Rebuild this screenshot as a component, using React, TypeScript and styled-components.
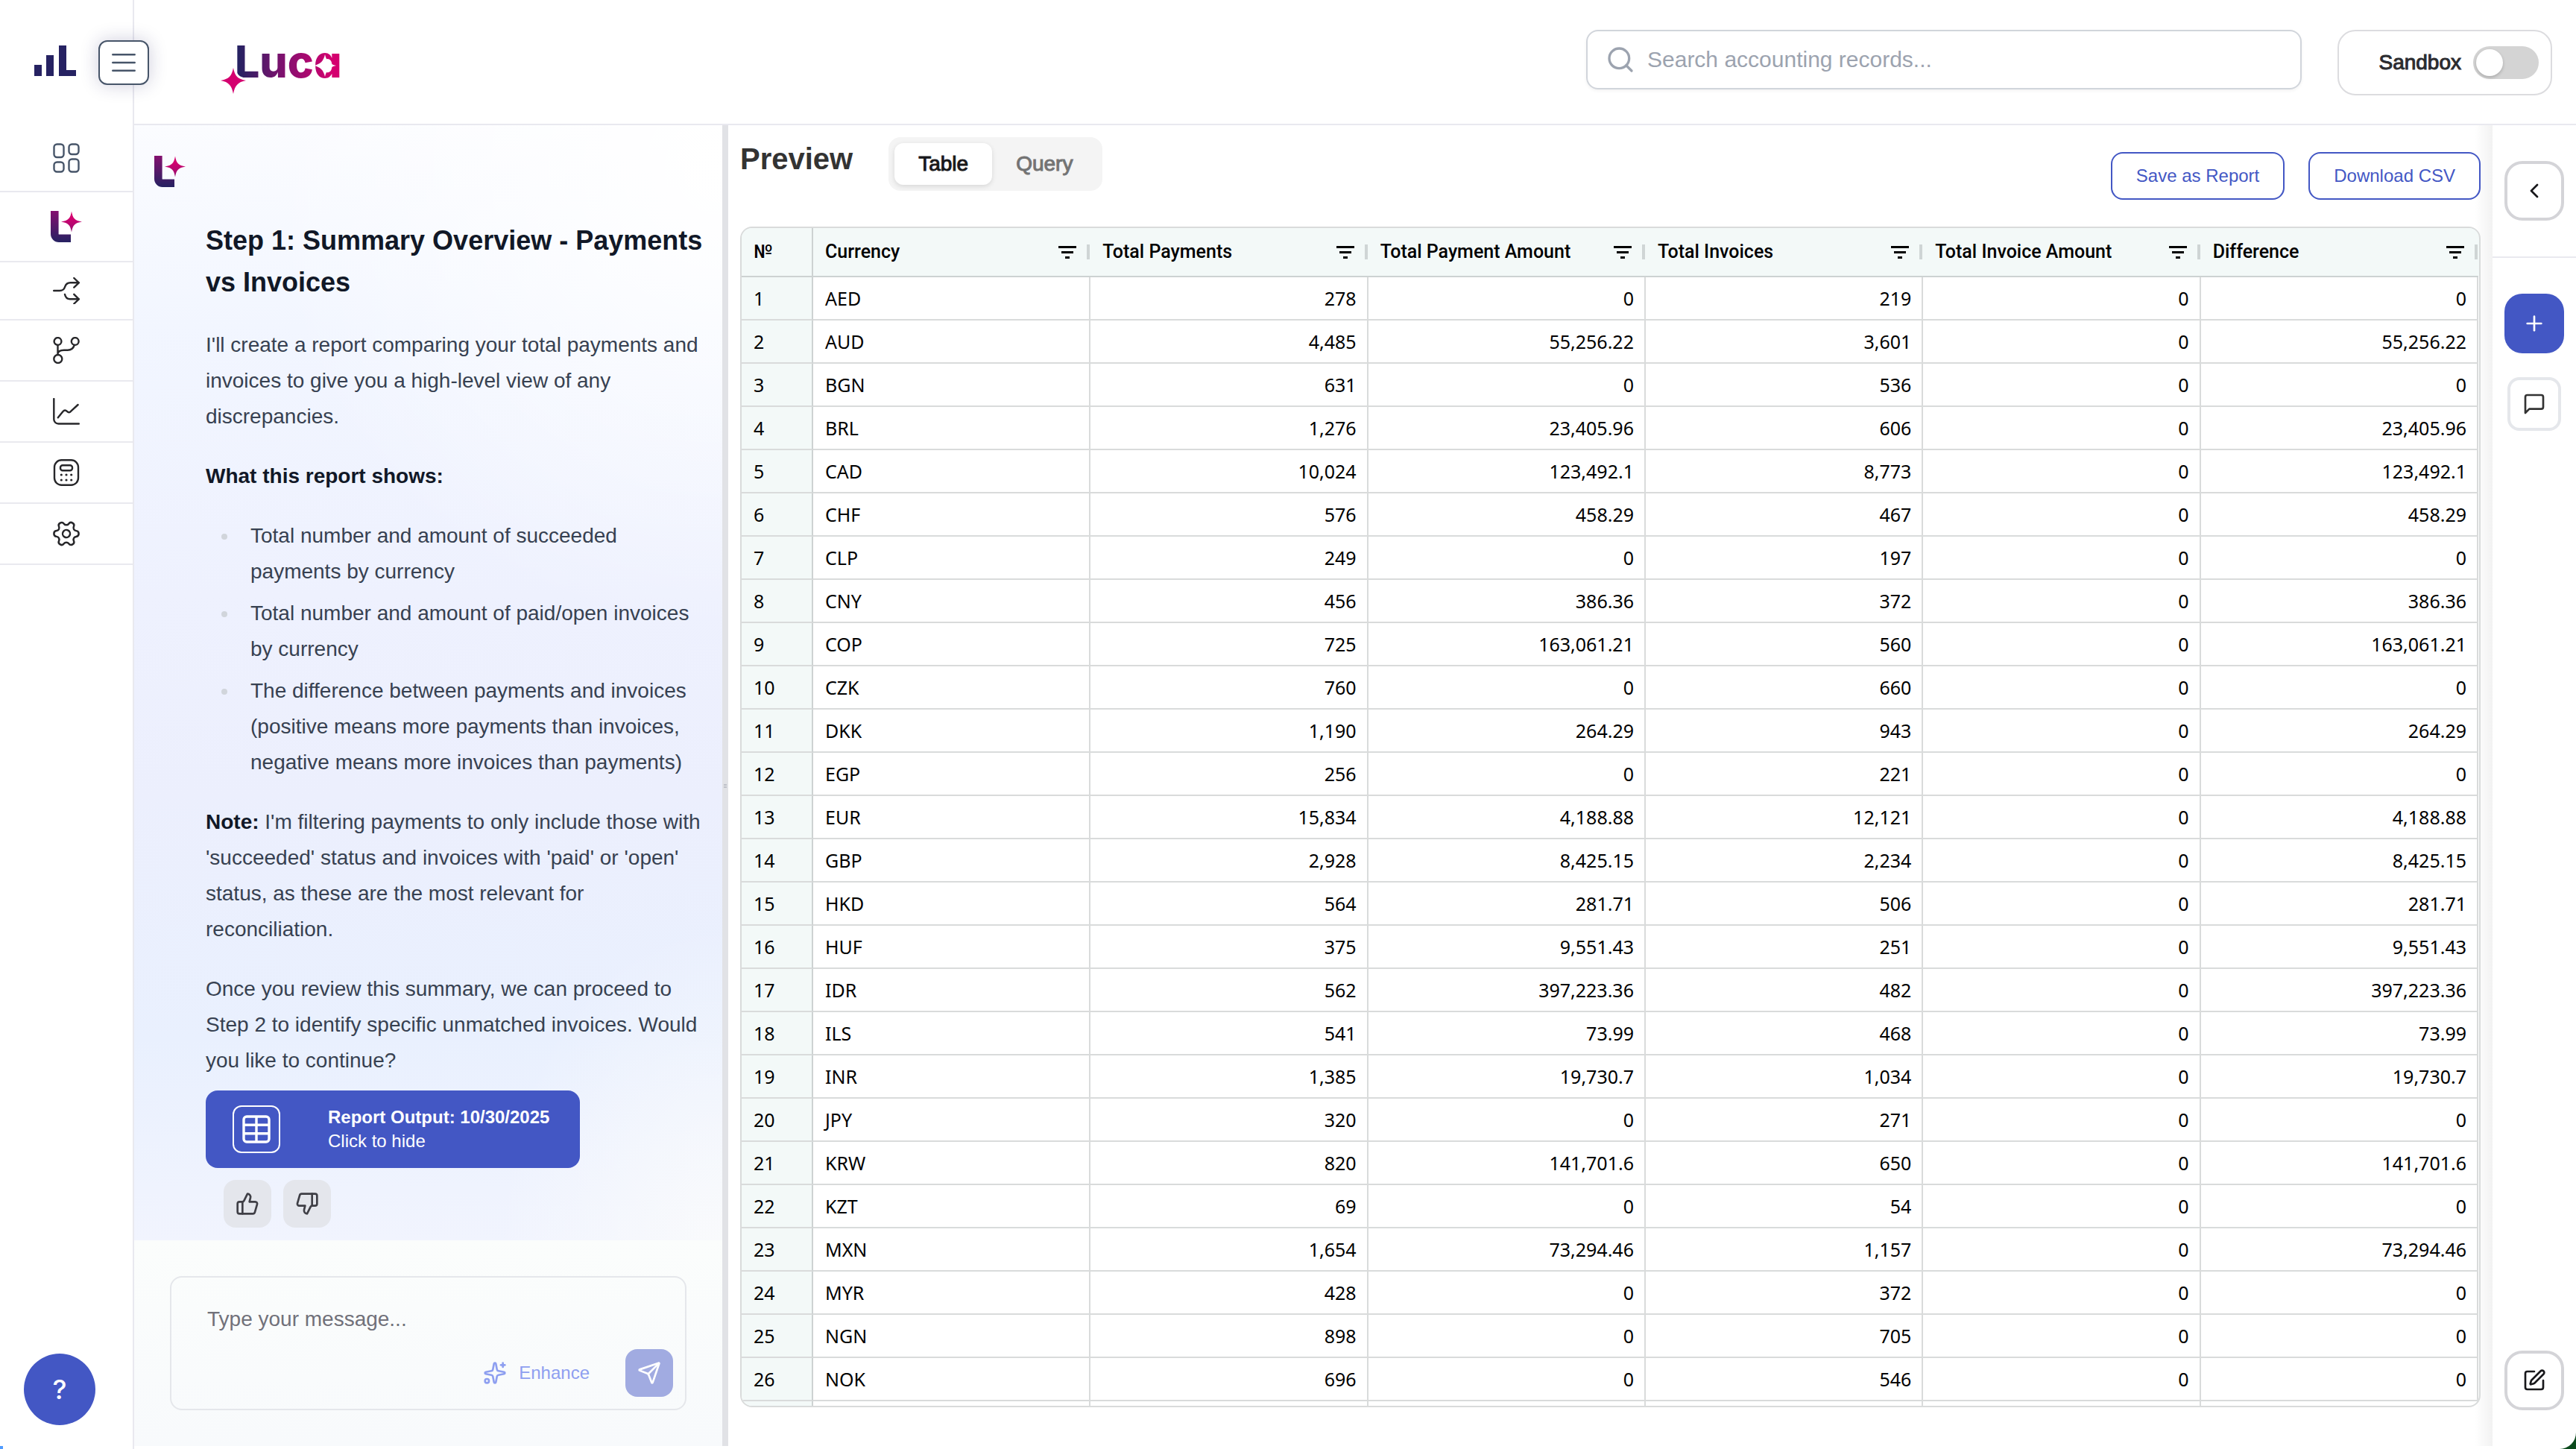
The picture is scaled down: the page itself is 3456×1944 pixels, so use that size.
import React, { useState } from "react";
import styled, { createGlobalStyle } from "styled-components";
import {
  ChevronLeft,
  Plus,
  Search,
  Send,
  Settings,
  Sparkles,
  SquarePen,
  ThumbsDown,
  ThumbsUp,
} from "lucide-react";

const sans = '"Liberation Sans", Arial, Helvetica, sans-serif';
const gridFont = '"Noto Sans", "Open Sans", sans-serif';
const gridHeadFont = 'Roboto, "Noto Sans", sans-serif';

const color = {
  brand: "#4357c4",
  navy: "#262262",
  pink: "#d4006f",
  rule: "#e9e9ef",
  slate: "#475569",
  body: "#374151",
  ink: "#111827",
  gridLine: "#d9dbdb",
  gridTint: "#f3f9f8",
};

const GlobalStyle = createGlobalStyle`
  *, *::before, *::after { box-sizing: border-box; }
  body { margin: 0; background: #0b4a1c; font-family: ${sans}; }
  button, input, textarea { font: inherit; }
  button { cursor: pointer; }
  svg { display: block; flex: none; }
`;

/* ---------- shell ---------- */

const Shell = styled.div`
  display: grid;
  grid-template-columns: 180px minmax(0, 1fr);
  height: 100vh;
  border-bottom-right-radius: 22px;
  overflow: hidden;
  background: linear-gradient(#4f9bff, #4f9bff) left bottom / 4px 4px no-repeat, #fff;
`;

const Sidebar = styled.aside`
  position: relative;
  z-index: 2;
  display: flex;
  flex-direction: column;
  border-right: 2px solid ${color.rule};
`;

const SidebarHead = styled.div`
  position: relative;
  flex: none;
  height: 168px;
  padding: 60px 46px 0;
`;

const MenuButton = styled.button`
  position: absolute;
  top: 54px;
  right: -22px;
  display: grid;
  place-items: center;
  width: 68px;
  height: 60px;
  padding: 0;
  border: 2px solid ${color.slate};
  border-radius: 12px;
  background: #fff;
  color: ${color.slate};
  box-shadow: 0 0 24px rgba(38, 34, 98, 0.22);
`;

const NavList = styled.nav`
  display: flex;
  flex-direction: column;
`;

const NavItem = styled.a<{ $height: number; $muted?: boolean }>`
  display: grid;
  place-items: center;
  height: ${(p) => p.$height}px;
  border-bottom: 2px solid ${color.rule};
  color: ${(p) => (p.$muted ? color.slate : "#27272a")};
`;

const TurnedGear = styled(Settings)`
  transform: rotate(30deg);
`;

const HelpButton = styled.button`
  width: 96px;
  height: 96px;
  margin: auto 0 32px 32px;
  border: 0;
  border-radius: 50%;
  background: ${color.brand};
  color: #fff;
  font: 500 36px/1 Inter, ${sans};
`;

const Column = styled.div`
  display: flex;
  flex-direction: column;
  min-width: 0;
  min-height: 0;
  padding-bottom: 4px;
`;

/* ---------- top bar ---------- */

const TopBar = styled.header`
  display: flex;
  align-items: flex-start;
  flex: none;
  height: 168px;
  padding: 40px 32px 0 116px;
  border-bottom: 2px solid ${color.rule};
`;

const SearchBox = styled.label`
  display: flex;
  align-items: center;
  gap: 16px;
  width: 960px;
  height: 80px;
  margin: 0 48px 0 auto;
  padding: 0 24px;
  border: 2px solid #d1d5db;
  border-radius: 16px;
  color: #9ca3af;
  box-shadow: 0 2px 4px rgba(0, 0, 0, 0.05);

  input {
    flex: 1;
    min-width: 0;
    padding: 0;
    border: 0;
    outline: 0;
    background: none;
    color: ${color.ink};
    font-size: 30px;
    line-height: 40px;
  }
  input::placeholder { color: #9ca3af; opacity: 1; }
`;

const SandboxBox = styled.label`
  display: flex;
  align-items: center;
  justify-content: flex-end;
  gap: 16px;
  width: 288px;
  height: 88px;
  padding: 0 16px 0 0;
  border: 2px solid #dcdcdf;
  border-radius: 24px;
  color: #2b2b2f;
  font-size: 28px;
  -webkit-text-stroke: 1px currentColor;
`;

const Toggle = styled.input`
  appearance: none;
  display: flex;
  align-items: center;
  width: 88px;
  height: 44px;
  margin: 0;
  padding: 4px;
  border-radius: 22px;
  background: #d4d4d4;

  &::before {
    content: "";
    width: 36px;
    height: 36px;
    border-radius: 50%;
    background: #fff;
    box-shadow: 0 2px 4px rgba(0, 0, 0, 0.2);
  }
  &:checked { justify-content: flex-end; background: ${color.brand}; }
`;

/* ---------- workspace ---------- */

const Workspace = styled.div`
  display: grid;
  grid-template-columns: 789px 8px minmax(0, 1fr) 112px;
  flex: 1;
  min-height: 0;
`;

const ChatPanel = styled.section`
  display: flex;
  flex-direction: column;
  min-height: 0;
`;

const Thread = styled.div`
  flex: 1;
  min-height: 0;
  overflow: hidden;
  padding: 41px 16px 16px 27px;
  background:
    radial-gradient(ellipse 620px 620px at 100% 4%, #fff 0%, rgba(255, 255, 255, 0) 100%),
    radial-gradient(ellipse 300px 420px at 100% 100%, rgba(250, 251, 252, 0.9) 0%, rgba(250, 251, 252, 0) 100%),
    linear-gradient(180deg, #fbfcff 0%, #f2f6ff 18%, #eef1fe 42%, #eceffd 60%, #e9f0fe 82%, #f1f4fe 100%);
`;

const Message = styled.article`
  display: flex;
  flex-direction: column;
  align-items: flex-start;
  gap: 32px;
  margin: 44px 0 0 69px;
  color: ${color.body};
  font-size: 28px;
  line-height: 48px;

  h2 {
    margin: 0;
    color: ${color.ink};
    font-size: 36px;
    line-height: 56px;
  }
  p { margin: 0; }
  strong { color: ${color.ink}; }
  ul {
    display: flex;
    flex-direction: column;
    gap: 8px;
    margin: 0;
    padding-left: 44px;
  }
  li { padding-left: 16px; }
  li::marker { color: #d1d5db; }
`;

const ReportCard = styled.button`
  display: flex;
  align-items: center;
  gap: 64px;
  height: 104px;
  min-width: 502px;
  margin: 16px 0 0 69px;
  padding: 0 36px;
  border: 0;
  border-radius: 16px;
  background: ${color.brand};
  color: #fff;
  text-align: left;
  font-size: 24px;
  line-height: 32px;
`;

const ReportIcon = styled.span`
  display: grid;
  place-items: center;
  width: 64px;
  height: 64px;
  border: 2px solid #fff;
  border-radius: 12px;
`;

const ReportText = styled.span`
  display: flex;
  flex-direction: column;
`;

const Feedback = styled.div`
  display: flex;
  gap: 16px;
  margin: 16px 0 0 93px;
`;

const FeedbackButton = styled.button`
  display: grid;
  place-items: center;
  width: 64px;
  height: 64px;
  padding: 0;
  border: 0;
  border-radius: 16px;
  background: #e4e6ec;
  color: #3f3f46;
`;

const Composer = styled.form`
  flex: none;
  padding: 48px;
  background: linear-gradient(#fbfdfc, #f8fafc);
`;

const ComposerBox = styled.div`
  display: flex;
  flex-direction: column;
  height: 180px;
  padding: 32px 16px 16px 48px;
  border: 2px solid #e5e7eb;
  border-radius: 16px;

  textarea {
    flex: 1;
    min-height: 0;
    padding: 8px 0;
    border: 0;
    outline: 0;
    resize: none;
    overflow: hidden;
    background: none;
    color: ${color.ink};
    font-size: 28px;
    line-height: 32px;
  }
  textarea::placeholder { color: #71717a; opacity: 1; }
`;

const ComposerActions = styled.div`
  display: flex;
  align-items: center;
  justify-content: flex-end;
  gap: 48px;
`;

const EnhanceButton = styled.button`
  display: flex;
  align-items: center;
  gap: 16px;
  padding: 0;
  border: 0;
  background: none;
  color: #8e9ff0;
  font-size: 24px;
`;

const SendButton = styled.button`
  display: grid;
  place-items: center;
  width: 64px;
  height: 64px;
  padding: 0;
  border: 0;
  border-radius: 16px;
  background: #a1abe1;
  color: #fff;
`;

const Splitter = styled.div`
  display: flex;
  flex-direction: column;
  align-items: center;
  justify-content: center;
  gap: 1px;
  background: #e1e2e6;

  i {
    width: 4px;
    height: 1px;
    background: #b3b6bf;
  }
`;

/* ---------- preview ---------- */

const Preview = styled.main`
  display: flex;
  flex-direction: column;
  min-width: 0;
  min-height: 0;
  padding: 16px 16px 52px;
  background: linear-gradient(90deg, rgba(0, 0, 0, 0), rgba(0, 0, 0, 0.05)) right / 24px 100% no-repeat, #fff;
`;

const PreviewBar = styled.div`
  display: flex;
  align-items: flex-start;
  flex: none;
  height: 120px;

  h1 {
    margin: 0 48px 0 0;
    color: #333;
    font-size: 40px;
    line-height: 58px;
  }
`;

const Tabs = styled.div`
  display: flex;
  padding: 8px;
  border-radius: 16px;
  background: #f4f4f4;
`;

const Tab = styled.button<{ $active: boolean }>`
  height: 56px;
  padding: 0 32px;
  border: 0;
  border-radius: 12px;
  background: ${(p) => (p.$active ? "#fff" : "transparent")};
  box-shadow: ${(p) => (p.$active ? "0 2px 6px rgba(0, 0, 0, 0.12)" : "none")};
  color: ${(p) => (p.$active ? "#18181b" : "#737373")};
  font-size: 28px;
  -webkit-text-stroke: 1px currentColor;
`;

const Actions = styled.div`
  display: flex;
  gap: 32px;
  margin: 20px 0 0 auto;
`;

const OutlineButton = styled.button`
  height: 64px;
  padding: 0 32px;
  border: 2px solid ${color.brand};
  border-radius: 16px;
  background: #fff;
  color: ${color.brand};
  font-size: 24px;
`;

const GridFrame = styled.div`
  flex: 1;
  min-height: 0;
  overflow: hidden;
  padding-right: 1px;
  border: 2px solid ${color.gridLine};
  border-radius: 16px;
  background: linear-gradient(${color.gridTint}, ${color.gridTint}) top / 100% 64px no-repeat, #fff;
`;

const Grid = styled.table`
  width: 100%;
  table-layout: fixed;
  border-collapse: separate;
  border-spacing: 0;
  color: #000;
  font-family: ${gridFont};
  font-size: 25px;
  line-height: 32px;

  th, td {
    padding: 0 14px 0 16px;
    border-right: 2px solid ${color.gridLine};
    border-bottom: 2px solid ${color.gridLine};
    font-weight: 400;
    text-align: right;
  }
  thead th {
    height: 66px;
    padding-right: 1px;
    border-right: 0;
    border-bottom-color: #cdd2d2;
    background: ${color.gridTint};
    font-family: ${gridHeadFont};
    font-weight: 500;
    text-align: left;
  }
  tbody tr { height: 58px; }
  thead th:first-child, tbody th { border-right: 2px solid #cdd2d2; }
  tbody th { background: ${color.gridTint}; text-align: left; }
  td:nth-child(2) { text-align: left; }
`;

const HeadCell = styled.div`
  display: flex;
  align-items: center;
  gap: 14px;
  white-space: nowrap;

  button {
    margin-left: auto;
    padding: 0;
    border: 0;
    background: none;
    color: #000;
  }
`;

const ColumnGrip = styled.i`
  width: 4px;
  height: 20px;
  background: #cfd5d5;
`;

/* ---------- right rail ---------- */

const Rail = styled.aside`
  display: flex;
  flex-direction: column;
  align-items: center;
`;

const RailTop = styled.div`
  flex: none;
  align-self: stretch;
  display: flex;
  justify-content: center;
  height: 178px;
  padding-top: 48px;
  border-bottom: 2px solid ${color.rule};
`;

const RailButton = styled.button<{ $kind: "outline" | "solid" | "soft" }>`
  display: grid;
  place-items: center;
  width: ${(p) => (p.$kind === "soft" ? 72 : 80)}px;
  height: ${(p) => (p.$kind === "soft" ? 72 : 80)}px;
  padding: 0;
  border: ${(p) => (p.$kind === "solid" ? "0" : `4px solid ${p.$kind === "soft" ? "#e5e7eb" : "#d4d4d8"}`)};
  border-radius: ${(p) => (p.$kind === "soft" ? 16 : 24)}px;
  background: ${(p) => (p.$kind === "solid" ? color.brand : "#fff")};
  color: ${(p) => (p.$kind === "solid" ? "#fff" : "#18181b")};
`;

const RailTools = styled.div`
  display: flex;
  flex: 1;
  flex-direction: column;
  align-items: center;
  gap: 32px;
  padding: 48px 0;

  > :last-child { margin-top: auto; }
`;

/* ---------- drawings ---------- */

const LineIcon = ({ size = 36, children }: { size?: number; children: React.ReactNode }) => (
  <svg
    width={size}
    height={size}
    viewBox={`0 0 ${size} ${size}`}
    fill="none"
    stroke="currentColor"
    strokeWidth="2.4"
    strokeLinecap="round"
    strokeLinejoin="round"
    aria-hidden
  >
    {children}
  </svg>
);

const BarsLogo = () => (
  <svg width="56" height="42" viewBox="0 0 56 42" fill={color.navy} role="img" aria-label="Home">
    <rect x="0" y="27" width="10" height="15" />
    <rect x="16" y="14" width="10" height="28" />
    <rect x="33" y="1" width="10" height="41" />
    <rect x="33" y="34" width="23" height="8" />
  </svg>
);

const LucaMark = ({ id }: { id: string }) => (
  <svg width="42" height="42" viewBox="0 0 42 42" role="img" aria-label="Luca">
    <defs>
      <linearGradient id={`${id}-stem`} gradientUnits="userSpaceOnUse" x1="0" y1="0" x2="0" y2="42">
        <stop offset="0" stopColor="#84106f" />
        <stop offset="1" stopColor={color.navy} />
      </linearGradient>
      <linearGradient id={`${id}-star`} x1="0" y1="0" x2="0" y2="1">
        <stop offset="0.3" stopColor={color.pink} />
        <stop offset="1" stopColor="#92106f" />
      </linearGradient>
    </defs>
    <path d="M5.3 0V31a5.7 5.7 0 0 0 5.7 5.7H27" fill="none" stroke={`url(#${id}-stem)`} strokeWidth="10.6" />
    <path
      d="M28 0.500C29.500 9.500 32 13 42 14.500C32 16 29.500 19.500 28 28.500C26.500 19.500 24 16 14 14.500C24 13 26.500 9.500 28 0.500Z"
      fill={`url(#${id}-star)`}
    />
  </svg>
);

const LucaWordmark = () => (
  <svg width="176" height="92" viewBox="0 0 176 92" role="img" aria-label="Luca">
    <defs>
      <linearGradient id="wordmark" gradientUnits="userSpaceOnUse" x1="24" y1="0" x2="150" y2="0">
        <stop offset="0" stopColor={color.navy} />
        <stop offset="0.5" stopColor="#84106f" />
        <stop offset="1" stopColor={color.pink} />
      </linearGradient>
    </defs>
    <text
      x="19"
      y="64"
      fill="url(#wordmark)"
      style={{ font: "800 59px Inter, sans-serif", fontFeatureSettings: '"cv11"' }}
    >
      Luca
    </text>
    <path d="M140 33C142 42 146 46 155 48C146 50 142 54 140 63C138 54 134 50 125 48C134 46 138 42 140 33Z" fill="#fff" />
    <path
      d="M17 51C19 62 23 66 34 68C23 70 19 75 17 86C15 75 11 70 0 68C11 66 15 62 17 51Z"
      fill={color.pink}
      stroke="#fff"
      strokeWidth="6"
      paintOrder="stroke"
    />
  </svg>
);

const GridIcon = () => (
  <svg width="36" height="40" viewBox="0 0 36 40" fill="none" stroke="currentColor" strokeWidth="2.4" aria-hidden>
    <rect x="1.500" y="1.500" width="13" height="17.500" rx="4" />
    <rect x="21.500" y="1.500" width="13" height="13.500" rx="4" />
    <rect x="1.500" y="25.500" width="13" height="13" rx="4" />
    <rect x="21.500" y="21.500" width="13" height="17" rx="4" />
  </svg>
);

const SplitIcon = () => (
  <LineIcon>
    <path d="M1.200 18H9c4.500 0 6-1.500 7.200-5.300S19.500 7.300 23.500 7.300H35M28.300 1l6.500 6.300-6.500 6.300M16 23c1 4.500 3 6.300 7 6.300H35M28.300 22.800l6.500 6.500-6.500 6.200" />
  </LineIcon>
);

const BranchIcon = () => (
  <LineIcon>
    <circle cx="6.500" cy="6" r="4.900" />
    <circle cx="29.700" cy="6" r="4.900" />
    <circle cx="6.800" cy="29.500" r="5.500" />
    <path d="M6.500 11V24M28.800 11c-1.500 4.500-4.500 6.700-9 6.700h-5c-4.500 0-7.800 1-8.300 5" />
  </LineIcon>
);

const ChartIcon = () => (
  <LineIcon>
    <path d="M1.300 1V28.500a6 6 0 0 0 6 6H34.800M6.800 26.300l6.500-8c2-2.300 3.700-2.300 5.600-.4 1.800 1.800 3.500 2 5.300-.2L33.600 9" />
  </LineIcon>
);

const CalculatorIcon = () => (
  <LineIcon>
    <rect x="2" y="1.300" width="32" height="33.500" rx="9.500" />
    <rect x="10" y="8.300" width="16" height="7" rx="3" />
    {[21, 28].flatMap((y) =>
      [11.3, 18, 24.7].map((x) => (
        <circle key={`${x}-${y}`} cx={x} cy={y} r="1.600" fill="currentColor" stroke="none" />
      ))
    )}
  </LineIcon>
);

const MenuIcon = () => (
  <svg width="32" height="28" viewBox="0 0 32 28" stroke="currentColor" strokeWidth="2.500" strokeLinecap="round" aria-hidden>
    <path d="M1.300 3.300h29.400M1.300 14h29.400M1.300 24.700h29.400" />
  </svg>
);

const SheetIcon = () => (
  <svg width="38" height="38" viewBox="0 0 38 38" fill="none" stroke="currentColor" strokeWidth="3.400" aria-hidden>
    <rect x="2" y="2" width="34" height="34" rx="4" />
    <path d="M19 2v34M2 13.300h34M2 24.700h34" />
  </svg>
);

const CommentIcon = () => (
  <svg width="32" height="32" viewBox="0 0 24 24" fill="none" stroke="#333" strokeWidth="2" strokeLinecap="round" strokeLinejoin="round" aria-hidden>
    <path d="M21 15a2 2 0 0 1-2 2H7l-4 4V5a2 2 0 0 1 2-2h14a2 2 0 0 1 2 2z" />
  </svg>
);

const FilterIcon = () => (
  <svg width="24" height="17" viewBox="0 0 24 17" fill="currentColor" aria-hidden>
    <rect x="0" y="0" width="24" height="3" />
    <rect x="4" y="7" width="16" height="3" />
    <rect x="9" y="14" width="6" height="3" />
  </svg>
);

/* ---------- data ---------- */

const columns = [
  "Currency",
  "Total Payments",
  "Total Payment Amount",
  "Total Invoices",
  "Total Invoice Amount",
  "Difference",
];

// currency, payments, payment amount, invoices
const rows: [string, string, string, string][] = [
  ["AED", "278", "0", "219"],
  ["AUD", "4,485", "55,256.22", "3,601"],
  ["BGN", "631", "0", "536"],
  ["BRL", "1,276", "23,405.96", "606"],
  ["CAD", "10,024", "123,492.1", "8,773"],
  ["CHF", "576", "458.29", "467"],
  ["CLP", "249", "0", "197"],
  ["CNY", "456", "386.36", "372"],
  ["COP", "725", "163,061.21", "560"],
  ["CZK", "760", "0", "660"],
  ["DKK", "1,190", "264.29", "943"],
  ["EGP", "256", "0", "221"],
  ["EUR", "15,834", "4,188.88", "12,121"],
  ["GBP", "2,928", "8,425.15", "2,234"],
  ["HKD", "564", "281.71", "506"],
  ["HUF", "375", "9,551.43", "251"],
  ["IDR", "562", "397,223.36", "482"],
  ["ILS", "541", "73.99", "468"],
  ["INR", "1,385", "19,730.7", "1,034"],
  ["JPY", "320", "0", "271"],
  ["KRW", "820", "141,701.6", "650"],
  ["KZT", "69", "0", "54"],
  ["MXN", "1,654", "73,294.46", "1,157"],
  ["MYR", "428", "0", "372"],
  ["NGN", "898", "0", "705"],
  ["NOK", "696", "0", "546"],
];

/* ---------- parts ---------- */

const SideNav = () => (
  <Sidebar>
    <SidebarHead>
      <BarsLogo />
      <MenuButton aria-label="Toggle menu"><MenuIcon /></MenuButton>
    </SidebarHead>
    <NavList>
      <NavItem href="#dashboard" aria-label="Dashboard" $height={90} $muted><GridIcon /></NavItem>
      <NavItem href="#luca" aria-label="Luca" $height={94}><LucaMark id="nav" /></NavItem>
      <NavItem href="#flows" aria-label="Flows" $height={78}><SplitIcon /></NavItem>
      <NavItem href="#branches" aria-label="Branches" $height={82}><BranchIcon /></NavItem>
      <NavItem href="#reports" aria-label="Reports" $height={82}><ChartIcon /></NavItem>
      <NavItem href="#accounting" aria-label="Accounting" $height={82}><CalculatorIcon /></NavItem>
      <NavItem href="#settings" aria-label="Settings" $height={82}><TurnedGear size={40} strokeWidth={1.5} /></NavItem>
    </NavList>
    <HelpButton aria-label="Help">?</HelpButton>
  </Sidebar>
);

const Chat = () => (
  <ChatPanel>
    <Thread>
      <LucaMark id="chat" />
      <Message>
        <h2>Step 1: Summary Overview - Payments vs Invoices</h2>
        <p>I'll create a report comparing your total payments and invoices to give you a high-level view of any discrepancies.</p>
        <p><strong>What this report shows:</strong></p>
        <ul>
          <li>Total number and amount of succeeded payments by currency</li>
          <li>Total number and amount of paid/open invoices by currency</li>
          <li>The difference between payments and invoices (positive means more payments than invoices, negative means more invoices than payments)</li>
        </ul>
        <p><strong>Note:</strong> I'm filtering payments to only include those with 'succeeded' status and invoices with 'paid' or 'open' status, as these are the most relevant for reconciliation.</p>
        <p>Once you review this summary, we can proceed to Step 2 to identify specific unmatched invoices. Would you like to continue?</p>
      </Message>
      <ReportCard>
        <ReportIcon><SheetIcon /></ReportIcon>
        <ReportText>
          <b>Report Output: 10/30/2025</b>
          <span>Click to hide</span>
        </ReportText>
      </ReportCard>
      <Feedback>
        <FeedbackButton aria-label="Good answer"><ThumbsUp size={32} /></FeedbackButton>
        <FeedbackButton aria-label="Bad answer"><ThumbsDown size={32} /></FeedbackButton>
      </Feedback>
    </Thread>
    <Composer onSubmit={(e) => e.preventDefault()}>
      <ComposerBox>
        <textarea aria-label="Message" placeholder="Type your message..." />
        <ComposerActions>
          <EnhanceButton type="button"><Sparkles size={32} />Enhance</EnhanceButton>
          <SendButton aria-label="Send"><Send size={32} /></SendButton>
        </ComposerActions>
      </ComposerBox>
    </Composer>
  </ChatPanel>
);

const ResultGrid = () => (
  <GridFrame>
    <Grid>
      <colgroup>
        <col style={{ width: 96 }} />
        {columns.map((name) => <col key={name} />)}
      </colgroup>
      <thead>
        <tr>
          <th scope="col">№</th>
          {columns.map((name) => (
            <th scope="col" key={name}>
              <HeadCell>
                {name}
                <button aria-label={`Filter ${name}`}><FilterIcon /></button>
                <ColumnGrip />
              </HeadCell>
            </th>
          ))}
        </tr>
      </thead>
      <tbody>
        {rows.map(([currency, payments, amount, invoices], i) => (
          <tr key={currency}>
            <th scope="row">{i + 1}</th>
            <td>{currency}</td>
            <td>{payments}</td>
            <td>{amount}</td>
            <td>{invoices}</td>
            <td>0</td>
            <td>{amount}</td>
          </tr>
        ))}
        <tr aria-hidden>
          <th />
          {columns.map((name) => <td key={name} />)}
        </tr>
      </tbody>
    </Grid>
  </GridFrame>
);

export default function App() {
  const [tab, setTab] = useState("Table");
  return (
    <>
      <GlobalStyle />
      <Shell>
        <SideNav />
        <Column>
          <TopBar>
            <LucaWordmark />
            <SearchBox>
              <Search size={40} strokeWidth={2} />
              <input type="search" aria-label="Search accounting records" placeholder="Search accounting records..." />
            </SearchBox>
            <SandboxBox>
              Sandbox
              <Toggle type="checkbox" role="switch" />
            </SandboxBox>
          </TopBar>
          <Workspace>
            <Chat />
            <Splitter><i /><i /><i /></Splitter>
            <Preview>
              <PreviewBar>
                <h1>Preview</h1>
                <Tabs role="tablist">
                  {["Table", "Query"].map((name) => (
                    <Tab key={name} role="tab" aria-selected={tab === name} $active={tab === name} onClick={() => setTab(name)}>
                      {name}
                    </Tab>
                  ))}
                </Tabs>
                <Actions>
                  <OutlineButton>Save as Report</OutlineButton>
                  <OutlineButton>Download CSV</OutlineButton>
                </Actions>
              </PreviewBar>
              <ResultGrid />
            </Preview>
            <Rail>
              <RailTop>
                <RailButton $kind="outline" aria-label="Collapse"><ChevronLeft size={32} /></RailButton>
              </RailTop>
              <RailTools>
                <RailButton $kind="solid" aria-label="New"><Plus size={32} /></RailButton>
                <RailButton $kind="soft" aria-label="Comments"><CommentIcon /></RailButton>
                <RailButton $kind="outline" aria-label="Edit"><SquarePen size={32} /></RailButton>
              </RailTools>
            </Rail>
          </Workspace>
        </Column>
      </Shell>
    </>
  );
}
